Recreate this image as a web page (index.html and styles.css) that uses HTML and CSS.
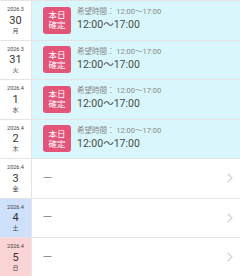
FILE: index.html
```html
<!DOCTYPE html>
<html lang="ja">
<head>
<meta charset="utf-8">
<link rel="stylesheet" href="styles.css">
</head>
<body>
<div class="list">
  <div class="row confirmed">
    <div class="date"><span class="ym">2026.3</span><span class="d">30</span><span class="wd">月</span></div>
    <div class="body">
      <div class="badge">本日<br>確定</div>
      <div class="times"><div class="hope">希望時間： 12:00〜17:00</div><div class="main">12:00〜17:00</div></div>
    </div>
  </div>
  <div class="row confirmed">
    <div class="date"><span class="ym">2026.3</span><span class="d">31</span><span class="wd">火</span></div>
    <div class="body">
      <div class="badge">本日<br>確定</div>
      <div class="times"><div class="hope">希望時間： 12:00〜17:00</div><div class="main">12:00〜17:00</div></div>
    </div>
  </div>
  <div class="row confirmed">
    <div class="date"><span class="ym">2026.4</span><span class="d">1</span><span class="wd">水</span></div>
    <div class="body">
      <div class="badge">本日<br>確定</div>
      <div class="times"><div class="hope">希望時間： 12:00〜17:00</div><div class="main">12:00〜17:00</div></div>
    </div>
  </div>
  <div class="row confirmed">
    <div class="date"><span class="ym">2026.4</span><span class="d">2</span><span class="wd">木</span></div>
    <div class="body">
      <div class="badge">本日<br>確定</div>
      <div class="times"><div class="hope">希望時間： 12:00〜17:00</div><div class="main">12:00〜17:00</div></div>
    </div>
  </div>
  <div class="row empty">
    <div class="date"><span class="ym">2026.4</span><span class="d">3</span><span class="wd">金</span></div>
    <div class="body"><span class="dash">—</span><svg class="chev" viewBox="0 0 6 10" width="6" height="10"><path d="M0.7 0.7 L5 5 L0.7 9.3" fill="none" stroke="#cfcfcf" stroke-width="1.2"/></svg></div>
  </div>
  <div class="row empty">
    <div class="date sat"><span class="ym">2026.4</span><span class="d">4</span><span class="wd">土</span></div>
    <div class="body"><span class="dash">—</span><svg class="chev" viewBox="0 0 6 10" width="6" height="10"><path d="M0.7 0.7 L5 5 L0.7 9.3" fill="none" stroke="#cfcfcf" stroke-width="1.2"/></svg></div>
  </div>
  <div class="row empty">
    <div class="date sun"><span class="ym">2026.4</span><span class="d">5</span><span class="wd">日</span></div>
    <div class="body"><span class="dash">—</span><svg class="chev" viewBox="0 0 6 10" width="6" height="10"><path d="M0.7 0.7 L5 5 L0.7 9.3" fill="none" stroke="#cfcfcf" stroke-width="1.2"/></svg></div>
  </div>
</div>
</body>
</html>
```
FILE: styles.css
```css
html, body { margin: 0; padding: 0; background: #fff; }
body { font-family: Roboto, "Noto Sans CJK JP", sans-serif; width: 240px; height: 276px; overflow: hidden; }
.list { border-top: 1px solid #e4e4e4; }
.row { display: flex; height: 38.5px; border-bottom: 1px solid #e4e4e4; }
.date { width: 31px; flex: none; display: flex; flex-direction: column; align-items: center; justify-content: center; border-right: 1px solid #e4e4e4; background: #fff; color: #333; line-height: 1; }
.date.sat { background: #cfe0fb; }
.date.sun { background: #fbd5d6; }
.ym { font-size: 5.5px; color: #444; }
.d { font-size: 11px; margin-top: 2px; }
.wd { font-size: 6px; margin-top: 2px; color: #444; }
.body { flex: 1; display: flex; align-items: center; padding-left: 11px; padding-right: 7px; }
.confirmed .body { background: #d8f6fb; }
.badge { width: 28px; height: 27px; border-radius: 3px; background: #e35479; color: #fff; font-size: 8.5px; line-height: 10px; display: flex; align-items: center; justify-content: center; text-align: center; flex: none; }
.times { margin-left: 6px; margin-top: -2px; }
.hope { font-size: 7.5px; color: #8a8a8a; line-height: 10px; }
.main { font-size: 10.5px; color: #4a4a4a; line-height: 13px; margin-top: 1px; }
.dash { font-family: "Noto Sans CJK JP", sans-serif; font-size: 10px; line-height: 10px; color: #777; flex: 1; margin-top: -5px; }
.chev { flex: none; }
```
